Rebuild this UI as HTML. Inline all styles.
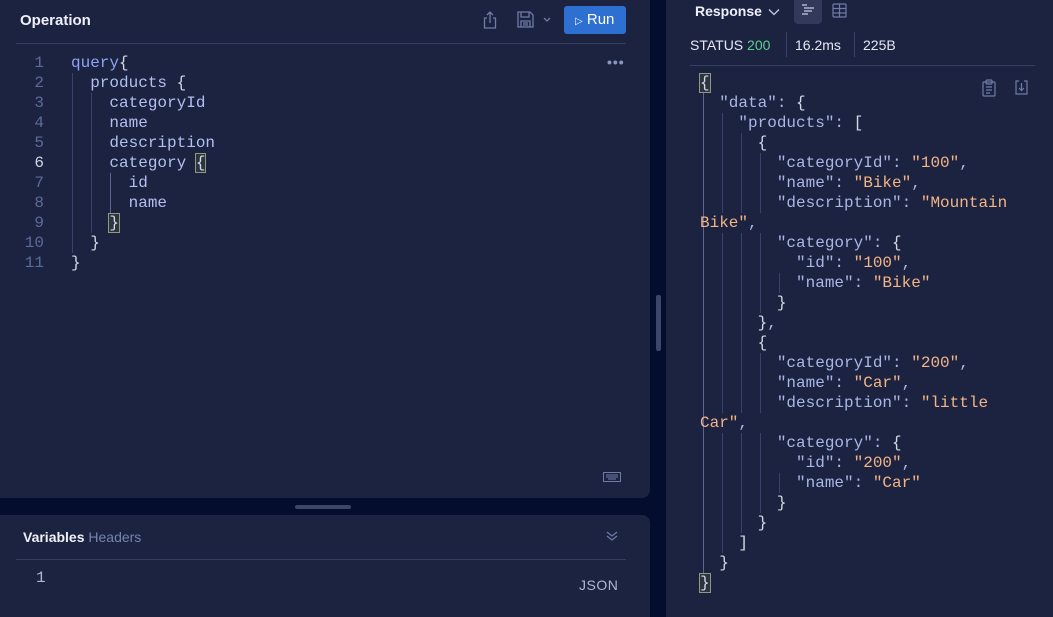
<!DOCTYPE html>
<html><head><meta charset="utf-8"><style>
*{margin:0;padding:0;box-sizing:border-box}
body{width:1053px;height:617px;background:#050d2e;position:relative;overflow:hidden;font-family:"Liberation Sans",sans-serif;color:#c8cfe8}
.p{position:absolute;background:#1c2341}
.m{font-family:"Liberation Mono",monospace;font-size:16px;position:absolute;white-space:pre;line-height:20px}
.ln{color:#5d6b99;width:20px;text-align:right;left:24px}
.c{color:#b3bff0}
.k{color:#8fa3f5}
.b{color:#d4d8e4}
.s{color:#f3b486}
.key{color:#a9b6e6}
.g{position:absolute;width:1px;background:#39426a}
.box{outline:1px solid #8f9a7c;background:#2c3440}
</style></head><body>
<div class="p" style="left:0;top:0;width:650px;height:498px;border-radius:0 0 8px 0"></div>
<div class="p" style="left:0;top:515px;width:650px;height:102px;border-radius:0 8px 0 0"></div>
<div class="p" style="left:666px;top:0;width:387px;height:617px"></div>
<div style="position:absolute;left:295px;top:505px;width:56px;height:4px;border-radius:2px;background:#3d4568"></div>
<div style="position:absolute;left:656px;top:295px;width:5px;height:56px;border-radius:2px;background:#3d4568"></div>

<div style="position:absolute;left:20px;top:12px;font-size:15px;font-weight:bold;color:#eef0f8">Operation</div>
<div style="position:absolute;left:16px;top:43px;width:610px;height:1px;background:#363e60"></div>
<svg style="position:absolute;left:483px;top:11px" width="14" height="18" viewBox="0 0 14 18" fill="none" stroke="#6f7ca6" stroke-width="1.3"><path d="M7 1v11M4 4l3-3 3 3M4 7H1.5v10h11V7H10"/></svg>
<svg style="position:absolute;left:517px;top:11px" width="17" height="17" viewBox="0 0 17 17" fill="none" stroke="#6f7ca6" stroke-width="1.3"><path d="M1 1h12l3 3v12H1z M4 1v5h8V1 M4 16v-6h9v6 M6 12h5 M6 14h5"/></svg>
<svg style="position:absolute;left:543px;top:17px" width="8" height="5" viewBox="0 0 8 5" fill="none" stroke="#6f7ca6" stroke-width="1.3"><path d="M1 1l3 3 3-3"/></svg>
<div style="position:absolute;left:564px;top:6px;width:62px;height:28px;border-radius:3px;background:#2e6fd2;color:#fff;font-size:15px;line-height:28px;padding-left:11px"><span style="font-size:10px">▷</span> Run</div>
<div style="position:absolute;left:607px;top:54px;color:#8b96bf;font-size:14px;font-weight:bold;letter-spacing:1px">•••</div>
<svg style="position:absolute;left:603px;top:472px" width="18" height="10" viewBox="0 0 18 10" fill="none" stroke="#6f7ca6" stroke-width="1"><rect x="0.5" y="0.5" width="17" height="9"/><path d="M3 3h12M3 5h12M5 7h8"/></svg>

<div class="m ln" style="top:53px">1<br>2<br>3<br>4<br>5<br><span style="color:#cfd4e4">6</span><br>7<br>8<br>9<br>10<br>11</div>
<div class="g" style="left:72px;top:73px;height:180px"></div>
<div class="g" style="left:91px;top:93px;height:140px"></div>
<div class="g" style="left:110px;top:173px;height:40px;background:#5a6698"></div>
<div class="m c" style="left:71px;top:53px"><span class="k">query</span><span class="b">{</span>
  products <span class="b">{</span>
    categoryId
    name
    description
    category <span class="b box">{</span>
      id
      name
    <span class="b box">}</span>
  <span class="b">}</span>
<span class="b">}</span></div>

<div style="position:absolute;left:23px;top:529px;font-size:14px;font-weight:bold;color:#eef0f8">Variables <span style="font-weight:normal;color:#7483b0">Headers</span></div>
<svg style="position:absolute;left:606px;top:530px" width="12" height="12" viewBox="0 0 12 12" fill="none" stroke="#6f7ca6" stroke-width="1.2"><path d="M1 2l5 4 5-4M1 6l5 4 5-4"/></svg>
<div style="position:absolute;left:16px;top:559px;width:610px;height:1px;background:#363e60"></div>
<div class="m" style="left:36px;top:568px;color:#aeb6d4">1</div>
<div style="position:absolute;left:579px;top:577px;font-size:14px;color:#aeb6d4;letter-spacing:0.5px">JSON</div>

<div style="position:absolute;left:695px;top:3px;font-size:14px;font-weight:bold;color:#eef0f8">Response</div>
<svg style="position:absolute;left:768px;top:8px" width="12" height="8" viewBox="0 0 12 8" fill="none" stroke="#c8cfe8" stroke-width="1.3"><path d="M1 1.5l5 5 5-5"/></svg>
<div style="position:absolute;left:794px;top:0;width:28px;height:24px;border-radius:0 0 4px 4px;background:#33395a"></div>
<svg style="position:absolute;left:801px;top:4px" width="14" height="12" viewBox="0 0 14 12" stroke="#c8cfe8" stroke-width="1.2"><path d="M1 1h5M3 4h10M3 7h8M1 10h6"/></svg>
<svg style="position:absolute;left:832px;top:3px" width="15" height="15" viewBox="0 0 15 15" fill="none" stroke="#6f7ca6" stroke-width="1.2"><rect x="1" y="1" width="13" height="13" rx="1"/><path d="M1 5.5h13M1 10h13M7.5 1v13"/></svg>
<div style="position:absolute;left:690px;top:37px;font-size:14px;color:#e4e8f4">STATUS <span style="color:#5fcf8a">200</span></div>
<div style="position:absolute;left:786px;top:32px;width:1px;height:25px;background:#3a4366"></div>
<div style="position:absolute;left:795px;top:37px;font-size:14px;color:#e4e8f4">16.2ms</div>
<div style="position:absolute;left:854px;top:32px;width:1px;height:25px;background:#3a4366"></div>
<div style="position:absolute;left:863px;top:37px;font-size:14px;color:#e4e8f4">225B</div>
<div style="position:absolute;left:690px;top:65px;width:345px;height:1px;background:#363e60"></div>
<svg style="position:absolute;left:982px;top:79px" width="14" height="18" viewBox="0 0 14 18" fill="none" stroke="#6f7ca6" stroke-width="1.2"><rect x="1" y="3" width="12" height="14" rx="1"/><rect x="4" y="1" width="6" height="4" rx="1"/><path d="M4 8h6M4 11h6M4 14h4"/></svg>
<svg style="position:absolute;left:1015px;top:80px" width="13" height="15" viewBox="0 0 13 15" fill="none" stroke="#6f7ca6" stroke-width="1.2"><path d="M4 1H1v13h11V1H9M6.5 3v7M4 8l2.5 2.5L9 8"/></svg>

<div class="g" style="left:703px;top:93px;height:480px;background:#5a6698"></div>
<div class="g" style="left:722px;top:113px;height:100px"></div><div class="g" style="left:722px;top:233px;height:180px"></div><div class="g" style="left:722px;top:433px;height:120px"></div>
<div class="g" style="left:741px;top:133px;height:80px"></div><div class="g" style="left:741px;top:233px;height:180px"></div><div class="g" style="left:741px;top:433px;height:100px"></div>
<div class="g" style="left:760px;top:153px;height:60px"></div><div class="g" style="left:760px;top:233px;height:80px"></div><div class="g" style="left:760px;top:353px;height:60px"></div><div class="g" style="left:760px;top:433px;height:80px"></div>
<div class="g" style="left:779px;top:273px;height:20px"></div><div class="g" style="left:779px;top:473px;height:20px"></div>
<div class="m key" style="left:700px;top:73px"><span class="b box">{</span>
  "data": <span class="b">{</span>
    "products": <span class="b">[</span>
      <span class="b">{</span>
        "categoryId": <span class="s">"100"</span>,
        "name": <span class="s">"Bike"</span>,
        "description": <span class="s">"Mountain</span>
<span class="s">Bike"</span>,
        "category": <span class="b">{</span>
          "id": <span class="s">"100"</span>,
          "name": <span class="s">"Bike"</span>
        <span class="b">}</span>
      <span class="b">}</span>,
      <span class="b">{</span>
        "categoryId": <span class="s">"200"</span>,
        "name": <span class="s">"Car"</span>,
        "description": <span class="s">"little</span>
<span class="s">Car"</span>,
        "category": <span class="b">{</span>
          "id": <span class="s">"200"</span>,
          "name": <span class="s">"Car"</span>
        <span class="b">}</span>
      <span class="b">}</span>
    <span class="b">]</span>
  <span class="b">}</span>
<span class="b box">}</span></div>
</body></html>
